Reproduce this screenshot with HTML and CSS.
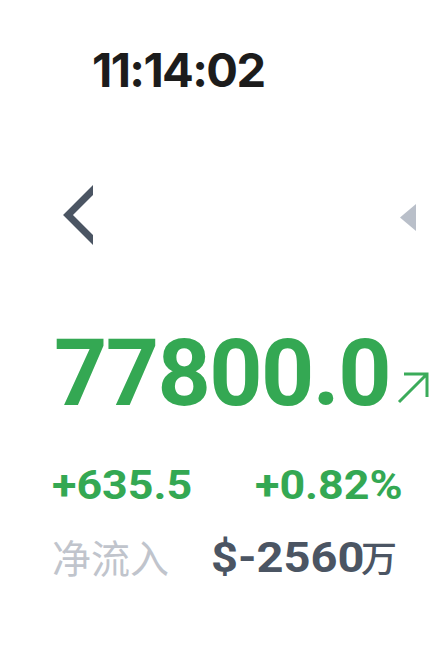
FILE: index.html
```html
<!DOCTYPE html>
<html lang="zh">
<head>
  <meta charset="UTF-8" />
  <meta name="viewport" content="width=device-width, initial-scale=1.0"/>
  <title>行情</title>
  <link rel="stylesheet" href="styles.css">
</head>
<body>
  <div class="screen">
    <div class="clock">11:14:02</div>

    <div class="nav">
      <span class="back">
        <svg width="32" height="62" viewBox="0 0 32 62">
          <polyline points="35,4 7,32 35,60" fill="none" stroke="#4b5563" stroke-width="7"/>
        </svg>
      </span>
      <span class="toggle">
        <svg width="16" height="27" viewBox="0 0 16 27">
          <polygon points="16,0 16,27 0,13.5" fill="#b9bfc9"/>
        </svg>
      </span>
    </div>

    <div class="price-row">
      <span class="price">77800.0</span>
      <svg class="trend" width="32" height="32" viewBox="0 0 32 32">
        <path d="M2 30 L30 2 M7 2 H30 V25" fill="none" stroke="#3bab5a" stroke-width="3"/>
      </svg>
    </div>

    <div class="change-row">
      <span class="change"><span class="wide">+635.5</span></span>
      <span class="change"><span class="wide">+0.82%</span></span>
    </div>

    <div class="flow-row">
      <span class="flow-label">净流入</span>
      <span class="flow-value"><span class="wide">$-2560</span><span class="unit">万</span></span>
    </div>
  </div>
</body>
</html>
```

FILE: styles.css
```css
body {
  margin: 0;
  background-color: #fff;
  font-family: Roboto, "Noto Sans CJK SC", sans-serif;
}

.screen {
  width: 437px;
  height: 646px;
  overflow: hidden;
}

.clock {
  padding: 41px 0 0 92px;
  font-family: Inter, sans-serif;
  font-weight: 700;
  font-size: 47px;
  line-height: 58px;
  letter-spacing: -1.6px;
  color: #1c1c1c;
}

.nav {
  display: flex;
  justify-content: space-between;
  align-items: flex-start;
  margin-top: 84px;
  padding: 0 21px 0 61px;
  height: 62px;
}

.back svg,
.toggle svg {
  display: block;
}

.toggle {
  margin-top: 21px;
}

.price-row {
  display: flex;
  align-items: flex-end;
  margin-top: 79px;
  padding-left: 54px;
}

.price {
  font-weight: 700;
  font-size: 93px;
  line-height: 100px;
  color: #34a853;
  letter-spacing: -1.6px;
}

.trend {
  margin: 0 0 20px 7px;
  flex-shrink: 0;
}

/* numbers below the price are drawn wider than the face */
.wide {
  display: inline-block;
  transform: scaleX(1.12);
  transform-origin: left center;
}

.change-row {
  display: grid;
  grid-template-columns: 203px auto;
  margin-top: 37px;
  padding-left: 52px;
}

.change {
  font-weight: 700;
  font-size: 40px;
  line-height: 50px;
  color: #34a853;
}

.flow-row {
  display: grid;
  grid-template-columns: 159px auto;
  align-items: start;
  margin-top: 20px;
  padding-left: 52px;
}

.flow-label {
  font-family: "Noto Sans CJK SC", sans-serif;
  font-size: 39px;
  line-height: 50px;
  color: #c0c4cc;
}

.flow-value {
  font-weight: 700;
  font-size: 42px;
  line-height: 50px;
  color: #4b5563;
}

.unit {
  margin-left: 13px;
  font-family: "Noto Sans CJK SC", sans-serif;
  font-weight: 500;
  font-size: 36px;
}
```
